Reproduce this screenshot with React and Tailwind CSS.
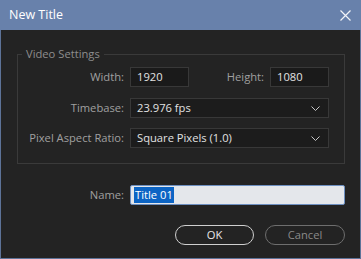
import React from "react";

const font = { fontFamily: '"Open Sans", "Noto Sans", sans-serif' };

function Chevron() {
  return (
    <svg width="9" height="5" viewBox="0 0 9 5" className="shrink-0">
      <polyline points="0.5,0.5 4.5,4.5 8.5,0.5" fill="none" stroke="#c8c8c8" strokeWidth="1" />
    </svg>
  );
}

function Select({ value }) {
  return (
    <div className="flex items-center h-[20px] w-[199px] bg-[#1c1c1c] border border-[#383838] pl-[6px] pr-[8px] text-[#e2e2e2]">
      <span className="flex-1">{value}</span>
      <Chevron />
    </div>
  );
}

export default function App() {
  return (
    <div
      className="w-[361px] h-[259px] bg-[#5d7398] flex flex-col px-[1px] pb-[1px] text-[11.2px] leading-[16px]"
      style={font}
    >
      <div className="h-[30px] -mx-[1px] bg-[#6881ab] flex items-center pl-[9px] pr-[10px] text-white text-[12.5px]">
        <span className="flex-1">New Title</span>
        <svg width="11" height="11" viewBox="0 0 11 11">
          <path d="M0.5 0.5 L10.5 10.5 M10.5 0.5 L0.5 10.5" stroke="#f2f4f8" strokeWidth="1.2" />
        </svg>
      </div>
      <div className="flex-1 bg-[#232323] flex flex-col pt-[16px]">
        <fieldset className="mx-[16px] mr-[15px] border border-[#3a3a3a] px-0 pb-[15px] min-w-0">
          <legend className="ml-[4px] px-[4px] text-[#8e8e8e]">Video Settings</legend>
          <div className="flex items-center gap-[6px] h-[20px] mt-[5px]">
            <span className="w-[106px] text-right text-[#a0a0a0]">Width:</span>
            <div className="w-[59px] h-[20px] bg-[#1a1a1a] border border-[#383838] pl-[6px] flex items-center text-[#e2e2e2]">1920</div>
            <span className="w-[69px] text-right text-[#a0a0a0]">Height:</span>
            <div className="w-[59px] h-[20px] bg-[#1a1a1a] border border-[#383838] pl-[6px] flex items-center text-[#e2e2e2]">1080</div>
          </div>
          <div className="flex items-center gap-[6px] h-[20px] mt-[11px]">
            <span className="w-[106px] text-right text-[#a0a0a0]">Timebase:</span>
            <Select value="23.976 fps" />
          </div>
          <div className="flex items-center gap-[6px] h-[20px] mt-[10px]">
            <span className="w-[106px] text-right text-[#a0a0a0]">Pixel Aspect Ratio:</span>
            <Select value="Square Pixels (1.0)" />
          </div>
        </fieldset>
        <div className="flex items-center gap-[6px] h-[20px] mt-[21px] ml-[17px] mr-[15px]">
          <span className="w-[106px] text-right text-[#a0a0a0]">Name:</span>
          <div className="flex-1 h-[20px] bg-[#e4e7eb] border border-[#6d8fc0] rounded-[2px] pl-[3px] flex items-center">
            <span className="bg-[#0c64c4] text-white px-[1px]">Title 01</span>
          </div>
        </div>
        <div className="flex justify-end gap-[11px] mt-[20px] mr-[15px]">
          <div className="w-[79px] h-[20px] rounded-full border-[1.5px] border-[#cfcfcf] text-[#e8e8e8] flex items-center justify-center">OK</div>
          <div className="w-[80px] h-[20px] rounded-full border-[1.5px] border-[#6e6e6e] text-[#8a8a8a] flex items-center justify-center">Cancel</div>
        </div>
      </div>
    </div>
  );
}
